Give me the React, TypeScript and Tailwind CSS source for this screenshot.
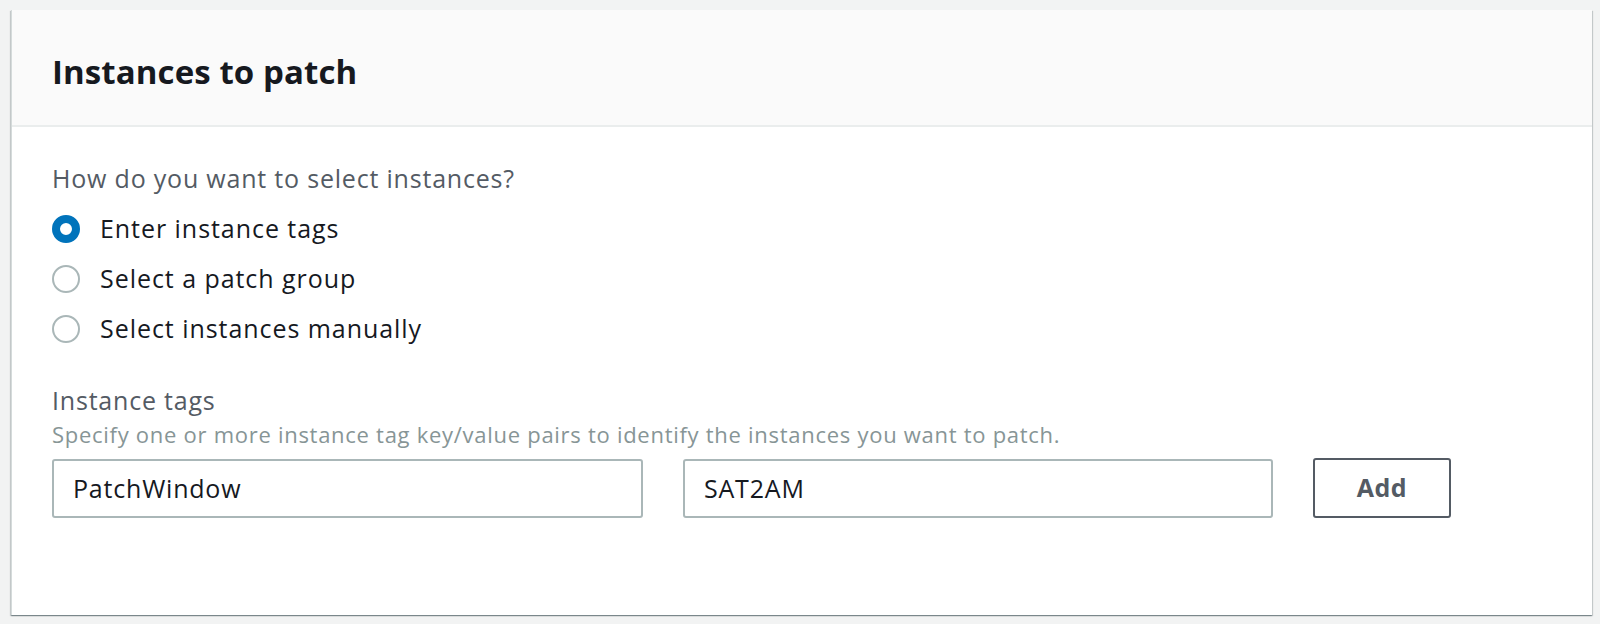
import { useState } from 'react';

const options = ['Enter instance tags', 'Select a patch group', 'Select instances manually'];

export default function App() {
  const [selected, setSelected] = useState(0);
  const [tagKey, setTagKey] = useState('PatchWindow');
  const [tagValue, setTagValue] = useState('SAT2AM');

  return (
    <div className="min-h-screen bg-[#f2f3f3] pt-[10px] pl-[11px] pr-[8px] pb-[9px]" style={{ fontFamily: '"Open Sans", "Liberation Sans", sans-serif' }}>
      <div className="bg-white h-[605px] border-l border-[#d5dbdb] shadow-[0_1px_1px_0_rgba(0,28,36,0.3),1px_1px_1px_0_rgba(0,28,36,0.15),-1px_1px_1px_0_rgba(0,28,36,0.15)]">
        <div className="h-[117px] bg-[#fafafa] border-b-2 border-[#eaeded] flex items-center pl-10 pt-[9px]">
          <h2 className="text-[33px] font-bold text-[#16191f] tracking-[0.1px]">Instances to patch</h2>
        </div>

        <div className="pl-10 pt-[34px]">
          <p className="text-[25px] leading-[34px] tracking-[0.8px] text-[#545b64]">How do you want to select instances?</p>

          <div className="mt-[9px] flex flex-col">
            {options.map((opt, i) => (
              <label key={opt} className="flex items-center h-[50px] cursor-pointer" onClick={() => setSelected(i)}>
                {selected === i ? (
                  <span className="shrink-0 w-[28px] h-[28px] rounded-full border-[8px] border-[#0073bb] bg-white" />
                ) : (
                  <span className="shrink-0 w-[28px] h-[28px] rounded-full border-2 border-[#aab7b8] bg-white" />
                )}
                <span className="ml-[20px] text-[25px] tracking-[0.95px] text-[#16191f]">{opt}</span>
              </label>
            ))}
          </div>

          <p className="mt-[29px] text-[25px] leading-[34px] tracking-[0.8px] text-[#545b64]">Instance tags</p>
          <p className="mt-[2px] text-[22px] leading-[30px] tracking-[0.72px] text-[#879596]">
            Specify one or more instance tag key/value pairs to identify the instances you want to patch.
          </p>

          <div className="mt-[9px] flex items-center">
            <input
              value={tagKey}
              onChange={(e) => setTagKey(e.target.value)}
              className="w-[591px] h-[59px] border-2 border-[#aab7b8] rounded-[3px] px-[19px] text-[25px] tracking-[0.8px] text-[#16191f] outline-none"
            />
            <input
              value={tagValue}
              onChange={(e) => setTagValue(e.target.value)}
              className="ml-[40px] w-[590px] h-[59px] border-2 border-[#aab7b8] rounded-[3px] px-[19px] text-[25px] tracking-[0.8px] text-[#16191f] outline-none"
            />
            <button className="ml-[40px] w-[138px] h-[60px] border-2 border-[#545b64] rounded-[3px] text-[25px] font-bold tracking-[0.5px] text-[#545b64] bg-white">
              Add
            </button>
          </div>
        </div>
      </div>
    </div>
  );
}
